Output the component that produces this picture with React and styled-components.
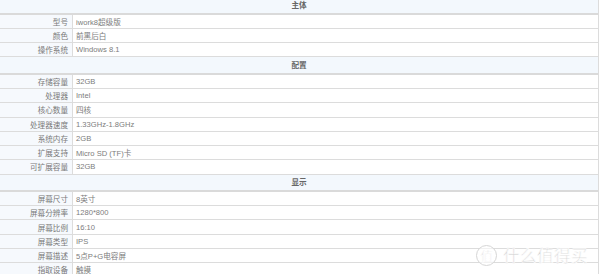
import React from 'react';
import styled, { createGlobalStyle } from 'styled-components';

const GlobalStyle = createGlobalStyle`
  html, body {
    margin: 0;
    padding: 0;
    background: #fff;
    overflow: hidden;
  }
  body {
    font-family: "Liberation Sans", "Noto Sans CJK SC", sans-serif;
  }
`;

const Page = styled.div`
  position: relative;
  width: 600px;
  height: 274px;
  overflow: hidden;
`;

const Sheet = styled.div`
  display: grid;
  grid-template-columns: 73px 1fr;
  width: 599px;
  margin-top: -2.7px;
  border-right: 1px solid #dcdcdc;
  box-sizing: border-box;
  font-size: 7.6px;
  color: #777;
`;

const SectionHead = styled.div`
  grid-column: 1 / span 2;
  box-sizing: border-box;
  height: 17.4px;
  padding-bottom: 1px;
  border-bottom: 2px solid #dadada;
  background: #f3f8fd;
  display: flex;
  align-items: center;
  justify-content: center;
  font-weight: bold;
  color: #666;
`;

const Cell = styled.div`
  box-sizing: border-box;
  height: 14.25px;
  border-bottom: 1px solid #dcdcdc;
  display: flex;
  align-items: center;
  white-space: nowrap;
`;

const Label = styled(Cell)`
  justify-content: flex-end;
  padding-right: 4px;
  background: #f6f9fd;
  border-right: 1px solid #dcdcdc;
  color: #7a7a7a;
`;

const Value = styled(Cell)`
  padding-left: 3px;
  color: #7c7c7c;
`;

const Watermark = styled.div`
  position: absolute;
  left: 476px;
  top: 245px;
  display: flex;
  align-items: center;
  gap: 6px;
  color: #d4d4d4;
  font-family: "Noto Sans CJK SC", sans-serif;
  -webkit-text-stroke: 0.6px #fff;
  pointer-events: none;
`;

const Badge = styled.span`
  width: 21px;
  height: 21px;
  border-radius: 50%;
  border: 1.5px solid #d6d6d6;
  box-sizing: border-box;
  display: flex;
  align-items: center;
  justify-content: center;
  font-size: 12px;
  background: rgba(255, 255, 255, 0.6);
`;

const Brand = styled.span`
  font-size: 16.5px;
  letter-spacing: 0.5px;
  line-height: 1;
`;

const specs = [
  {
    title: '主体',
    rows: [
      ['型号', 'iwork8超级版'],
      ['颜色', '前黑后白'],
      ['操作系统', 'Windows 8.1'],
    ],
  },
  {
    title: '配置',
    rows: [
      ['存储容量', '32GB'],
      ['处理器', 'Intel'],
      ['核心数量', '四核'],
      ['处理器速度', '1.33GHz-1.8GHz'],
      ['系统内存', '2GB'],
      ['扩展支持', 'Micro SD (TF)卡'],
      ['可扩展容量', '32GB'],
    ],
  },
  {
    title: '显示',
    rows: [
      ['屏幕尺寸', '8英寸'],
      ['屏幕分辨率', '1280*800'],
      ['屏幕比例', '16:10'],
      ['屏幕类型', 'IPS'],
      ['屏幕描述', '5点P+G电容屏'],
      ['指取设备', '触摸'],
    ],
  },
];

export default function App() {
  return (
    <>
      <GlobalStyle />
      <Page>
        <Sheet>
          {specs.map((section) => (
            <React.Fragment key={section.title}>
              <SectionHead>{section.title}</SectionHead>
              {section.rows.map(([label, value]) => (
                <React.Fragment key={label}>
                  <Label>{label}</Label>
                  <Value>{value}</Value>
                </React.Fragment>
              ))}
            </React.Fragment>
          ))}
        </Sheet>
        <Watermark>
          <Badge>值</Badge>
          <Brand>什么值得买</Brand>
        </Watermark>
      </Page>
    </>
  );
}
